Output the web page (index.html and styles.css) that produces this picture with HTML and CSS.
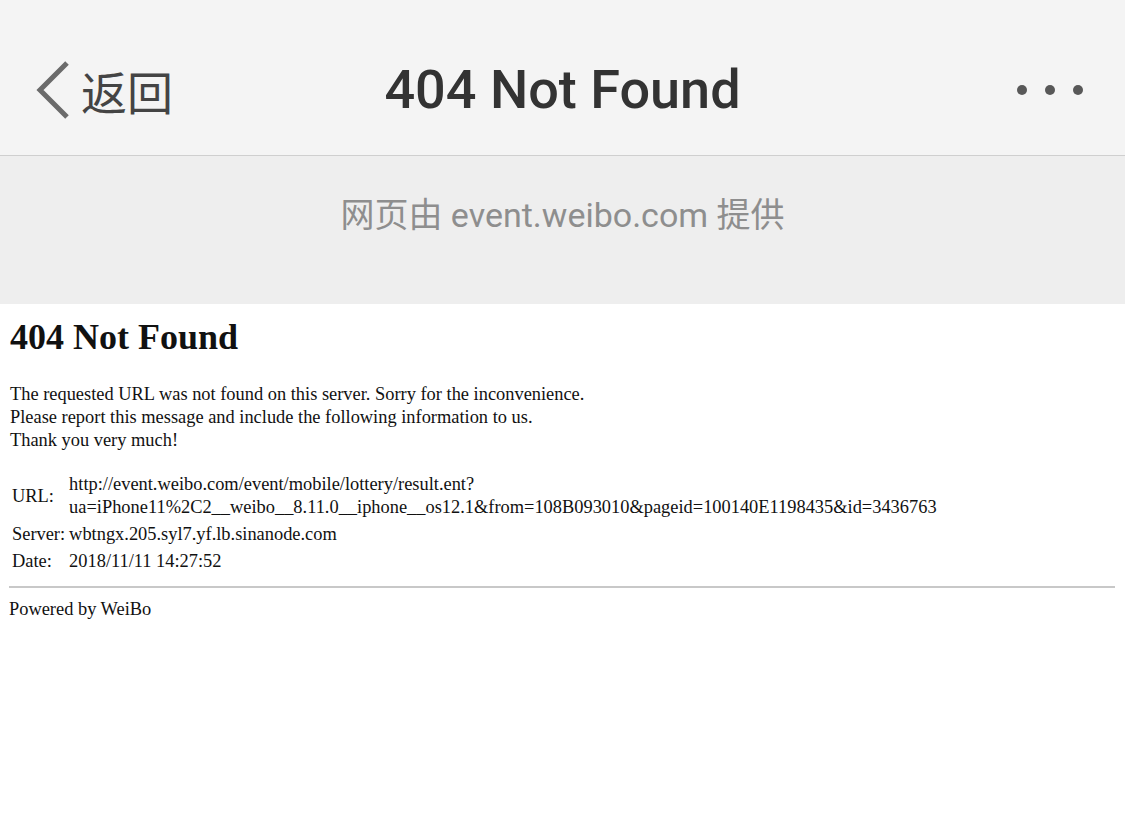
FILE: index.html
```html
<!DOCTYPE html>
<html>
<head>
    <meta charset="UTF-8">
    <title>404 Not Found</title>
    <link rel="stylesheet" href="styles.css">
</head>
<body>
    <div class="navbar">
        <div class="nav-back">
            <svg class="chevron" width="34" height="60" viewBox="0 0 34 60">
                <polyline points="31,3 4,30 31,57" fill="none" stroke="#6b6b6b" stroke-width="5"/>
            </svg>
            <span class="back-text">返回</span>
        </div>
        <div class="nav-title">404 Not Found</div>
        <div class="nav-more">
            <span class="dot"></span><span class="dot"></span><span class="dot"></span>
        </div>
    </div>

    <div class="provider">网页由 event.weibo.com 提供</div>

    <div class="page">
        <h1>404 Not Found</h1>
        <p class="message">The requested URL was not found on this server. Sorry for the inconvenience.<br>
        Please report this message and include the following information to us.<br>
        Thank you very much!</p>
        <table class="info">
            <tr>
                <td>URL:</td>
                <td>http://event.weibo.com/event/mobile/lottery/result.ent?<br>ua=iPhone11%2C2__weibo__8.11.0__iphone__os12.1&amp;from=108B093010&amp;pageid=100140E1198435&amp;id=3436763</td>
            </tr>
            <tr>
                <td>Server:</td>
                <td>wbtngx.205.syl7.yf.lb.sinanode.com</td>
            </tr>
            <tr>
                <td>Date:</td>
                <td>2018/11/11 14:27:52</td>
            </tr>
        </table>
        <hr>
        Powered by WeiBo
    </div>
</body>
</html>
```

FILE: styles.css
```css
html {
    background: #fff;
}

body {
    margin: 0;
    font-family: "Liberation Serif", "Times New Roman", serif;
}

.navbar {
    height: 131px;
    padding: 24px 36px 0;
    background: #f4f4f4;
    border-bottom: 1px solid #cfcfcf;
    display: grid;
    grid-template-columns: 1fr auto 1fr;
    align-items: center;
    font-family: Roboto, "Noto Sans CJK SC", sans-serif;
}

.nav-back {
    display: flex;
    align-items: center;
}

.chevron {
    margin-right: 11px;
}

.back-text {
    font-family: "Noto Sans CJK SC", sans-serif;
    font-size: 46px;
    color: #444;
    line-height: 1;
}

.nav-title {
    font-size: 54px;
    font-weight: 500;
    color: #333;
}

.nav-more {
    display: flex;
    gap: 18px;
    justify-content: flex-end;
    padding-right: 6px;
}

.dot {
    width: 10px;
    height: 10px;
    border-radius: 50%;
    background: #585858;
}

.provider {
    height: 148px;
    background: #eeeeee;
    text-align: center;
    padding-top: 32px;
    box-sizing: border-box;
    font-family: Roboto, "Noto Sans CJK SC", sans-serif;
    font-size: 34px;
    color: #8e8e8e;
}

.page {
    padding: 0 10px 0 9px;
    font-size: 18.4px;
    color: #111;
}

h1 {
    font-size: 36px;
    margin: 12px 0 25px 1px;
}

.message {
    line-height: 23px;
    margin: 0 0 18px 1px;
}

.info {
    border-spacing: 2px;
    line-height: 23px;
}

.info td {
    padding: 1px;
    vertical-align: middle;
}

.info td:first-child {
    white-space: nowrap;
}

hr {
    margin: 10px 0 11px;
    border: 0;
    border-top: 2px solid #c8c8c8;
}
```
